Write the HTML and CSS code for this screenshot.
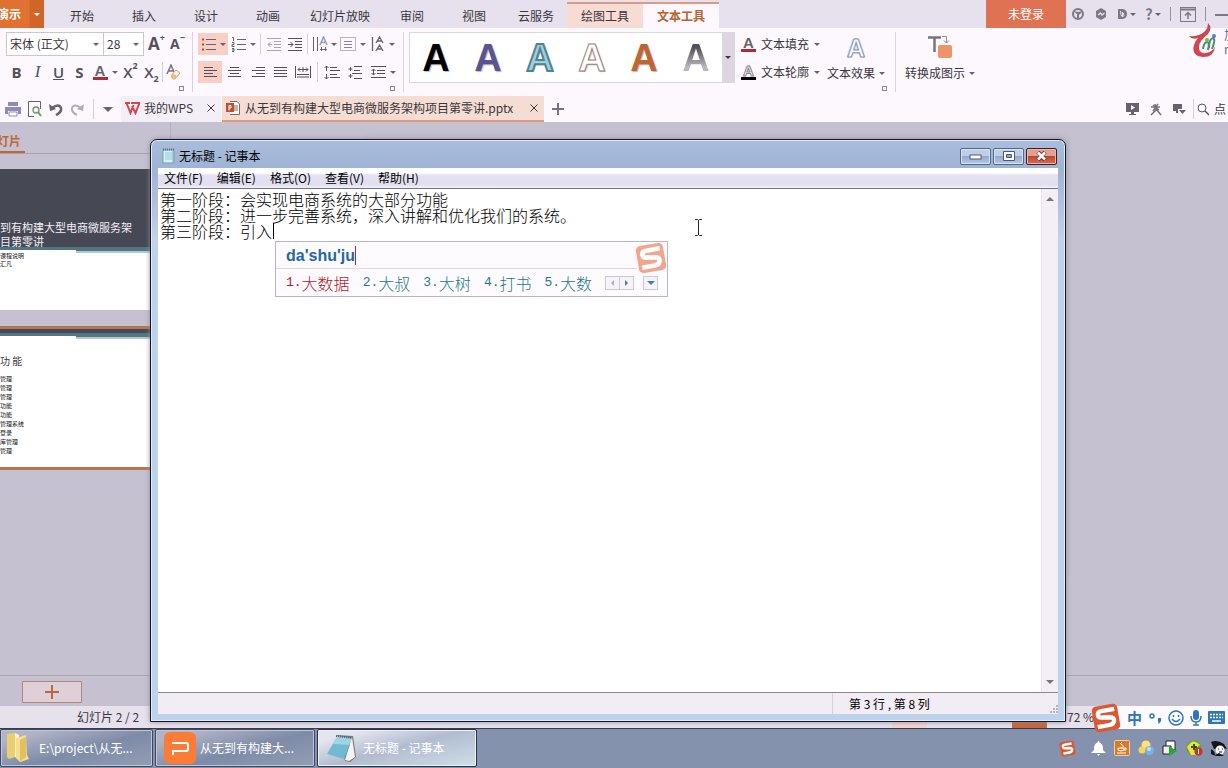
FILE: index.html
```html
<!DOCTYPE html>
<html lang="zh-CN">
<head>
<meta charset="utf-8">
<title>无标题 - 记事本</title>
<link rel="stylesheet" href="styles.css">
</head>
<body>
<div class="desktop">
<main class="app">
  <header class="tabs">
    <button class="brand"><span>演示</span><i class="caret light"></i></button>
    <nav class="tab-list">
      <button class="tab">开始</button>
      <button class="tab">插入</button>
      <button class="tab">设计</button>
      <button class="tab">动画</button>
      <button class="tab wide">幻灯片放映</button>
      <button class="tab">审阅</button>
      <button class="tab">视图</button>
      <button class="tab">云服务</button>
      <button class="tab context">绘图工具</button>
      <button class="tab context active">文本工具</button>
    </nav>
    <button class="login">未登录</button>
    <div class="sys">
      <button aria-label="皮肤"><svg width="14" height="14" viewBox="0 0 14 14"><circle cx="7" cy="7" r="5" fill="none" stroke="#7c7884" stroke-width="2"/><path d="M2 4l4 3v5h2V8l4-4-5 1z" fill="#7c7884"/></svg></button>
      <button aria-label="消息"><svg width="14" height="14" viewBox="0 0 14 14"><path d="M7 1l5 3v6l-5 3-5-3V4z" fill="#7c7884"/><path d="M4 8l2.500-2 1.500 2 2.500-2" fill="none" stroke="#e6e1ec" stroke-width="1.300"/></svg></button>
      <button aria-label="云文档"><svg width="11" height="14" viewBox="0 0 11 14"><path d="M1 2h5q4 1 4 5t-4 5H1z" fill="#7c7884"/><path d="M3.500 4q0 5 2 6 2-1 1-4M5.500 10V5" fill="none" stroke="#e6e1ec"/></svg><i class="caret"></i></button>
      <button aria-label="帮助"><b>?</b><i class="caret"></i></button>
      <i class="sep"></i>
      <button class="up" aria-label="折叠功能区"><svg width="16" height="15" viewBox="0 0 16 15"><rect x=".5" y=".5" width="15" height="14" fill="none" stroke="#7c7884"/><path d="M1 2.500h14" stroke="#7c7884" stroke-width="2"/><path d="M8 12V6M5 8.500l3-3 3 3" fill="none" stroke="#7c7884" stroke-width="1.500"/></svg></button>
      <i class="sep"></i>
      <button class="min" aria-label="最小化"></button>
    </div>
  </header>

  <section class="ribbon">
    <div class="group font-group">
      <div class="row">
        <div class="combo"><input class="font-name" aria-label="字体" value="宋体 (正文)"><i class="caret"></i></div>
        <div class="combo size"><input class="font-size" aria-label="字号" value="28"><i class="caret"></i></div>
        <button class="tool grow" aria-label="增大字号">A<sup>+</sup></button>
        <button class="tool shrink" aria-label="减小字号">A<sup>−</sup></button>
      </div>
      <div class="row">
        <button class="tool"><b>B</b></button>
        <button class="tool serif"><i>I</i></button>
        <button class="tool strong"><u>U</u></button>
        <button class="tool"><b>S</b></button>
        <button class="tool drop" aria-label="字体颜色"><span class="bar-a red">A</span><i class="caret"></i></button>
        <button class="tool x">X<sup>2</sup></button>
        <button class="tool x">X<sub>2</sub></button>
        <i class="sep"></i>
        <button class="tool" aria-label="清除格式"><svg width="16" height="16" viewBox="0 0 16 16"><path d="M1 10L5 1l3 7M2.500 7H7" fill="none" stroke="#77737e" stroke-width="1.500"/><path d="M5 12l5-6 4 3-5 6H7z" fill="#fff8ef" stroke="#d8a468"/><path d="M5 12l2-3 4 3-2 3H7z" fill="#eebb80"/></svg></button>
      </div>
      <i class="launcher"></i>
    </div>

    <div class="group para-group">
      <div class="row">
        <button class="tool drop on" aria-label="项目符号"><svg width="15" height="15" viewBox="0 0 15 15"><path d="M5 2.500h10M5 7.500h10M5 12.500h10" stroke="#67636e"/><path d="M1 2.500h2M1 7.500h2M1 12.500h2" stroke="#a0524a" stroke-width="2"/></svg><i class="caret"></i></button>
        <button class="tool drop" aria-label="编号"><svg width="15" height="17" viewBox="0 0 15 17"><path d="M6 3.500h9M6 8.500h9M6 13.500h9" stroke="#67636e"/><path d="M1 1.500h1.500V5M1 6.500h2v2H1v2h2.500M1 12.500h2v3H1M1 14h2" fill="none" stroke="#67636e"/></svg><i class="caret"></i></button>
        <i class="sep"></i>
        <button class="tool faint" aria-label="减少缩进"><svg width="14" height="14" viewBox="0 0 14 14"><path d="M0 1.500h14M7 4.500h7M7 7.500h7M7 10.500h7M0 13.500h14M5 7.500H1M3.500 5L1 7.500 3.500 10" fill="none" stroke="#55515c"/></svg></button>
        <button class="tool" aria-label="增加缩进"><svg width="14" height="14" viewBox="0 0 14 14"><path d="M0 1.500h14M7 4.500h7M7 7.500h7M7 10.500h7M0 13.500h14M0 7.500h5M2.500 5L5 7.500 2.500 10" fill="none" stroke="#55515c"/></svg></button>
        <i class="sep"></i>
        <button class="tool dir" aria-label="文字方向"><svg width="16" height="16" viewBox="0 0 16 16"><path d="M1.500 1v14M5.500 1v14M9.500 11v4M13.500 11v4M8 13.500h7" stroke="#67636e"/><path d="M8 9l3.500-8L15 9M9 6.500h5" fill="none" stroke="#9a9bb8" stroke-width="1.500"/></svg><i class="caret"></i></button>
        <button class="tool drop" aria-label="对齐文本"><svg width="16" height="14" viewBox="0 0 16 14"><rect x=".5" y=".5" width="15" height="13" fill="none" stroke="#77737e" stroke-dasharray="1 1"/><path d="M4 4.500h8M4 7.500h8M4 10.500h8" stroke="#8482a0"/></svg><i class="caret"></i></button>
        <button class="tool drop" aria-label="文字排列"><svg width="14" height="16" viewBox="0 0 14 16"><path d="M1.500 1v14M5 7l3.500-6L12 7M6.500 5h4M5 15l3.500-6 3.500 6M6.500 13h4" fill="none" stroke="#67636e" stroke-width="1.300"/></svg><i class="caret"></i></button>
      </div>
      <div class="row">
        <button class="tool on left" aria-label="左对齐"><svg width="13" height="11" viewBox="0 0 13 11"><path d="M0 .5h9M0 3.500h13M0 6.500h9M0 9.500h13" stroke="#55515c"/></svg></button>
        <button class="tool w24" aria-label="居中"><svg width="13" height="11" viewBox="0 0 13 11"><path d="M2 .5h9M0 3.500h13M2 6.500h9M0 9.500h13" stroke="#55515c"/></svg></button>
        <button class="tool w24" aria-label="右对齐"><svg width="13" height="11" viewBox="0 0 13 11"><path d="M4 .5h9M0 3.500h13M4 6.500h9M0 9.500h13" stroke="#55515c"/></svg></button>
        <button class="tool" aria-label="两端对齐"><svg width="13" height="11" viewBox="0 0 13 11"><path d="M0 .5h13M0 3.500h13M0 6.500h13M0 9.500h13" stroke="#55515c"/></svg></button>
        <button class="tool w24" aria-label="分散对齐"><svg width="16" height="12" viewBox="0 0 16 12"><path d="M.5 0v12M15.500 0v12M3 3.500h10M5 1.500l-2 2 2 2M11 1.500l2 2-2 2M8 1v5M2 8.500h12M2 11h12" fill="none" stroke="#55515c"/></svg></button>
        <i class="sep"></i>
        <button class="tool w24" aria-label="行距"><svg width="16" height="15" viewBox="0 0 16 15"><path d="M6 2.500h7M6 5.500h10M6 9.500h7M6 12.500h10M2.500 1v5M.5 3l2-2 2 2M2.500 9v5M.5 12l2 2 2-2" fill="none" stroke="#55515c"/></svg></button>
        <button class="tool w24" aria-label="段落间距"><svg width="16" height="15" viewBox="0 0 16 15"><path d="M6 1.500h8M6 5.500h6M4 8.500h10M6 13.500h8M2.500 2v4M.5 4h4M2.500 9v4M.5 11h4" fill="none" stroke="#55515c"/></svg></button>
        <button class="tool drop" aria-label="行间距"><svg width="15" height="14" viewBox="0 0 15 14"><path d="M0 1.500h15M6 5.500h8M6 8.500h8M0 12.500h15M2.500 4v6M.5 6l2-2 2 2M.5 8l2 2 2-2" fill="none" stroke="#55515c"/></svg><i class="caret"></i></button>
      </div>
      <i class="launcher"></i>
    </div>

    <div class="group art-group">
      <div class="gallery">
        <button class="art black">A</button>
        <button class="art violet">A</button>
        <button class="art aqua">A</button>
        <button class="art hollow">A</button>
        <button class="art rust">A</button>
        <button class="art fade">A</button>
        <button class="more" aria-label="更多样式"><i class="caret"></i></button>
      </div>
      <div class="stack">
        <button class="cmd"><span class="bar-a red">A</span>文本填充<i class="caret"></i></button>
        <button class="cmd"><span class="bar-a ink">A</span>文本轮廓<i class="caret"></i></button>
      </div>
      <button class="big"><span class="effect">A</span><span class="cap">文本效果<i class="caret"></i></span></button>
      <i class="launcher"></i>
    </div>

    <div class="group last">
      <button class="big"><svg width="26" height="24" viewBox="0 0 26 24"><path d="M1 2.500h13M7.500 3v14" stroke="#77737e" stroke-width="2.500"/><path d="M15 1.500h4.500V8M17 5.500l2.500 2.500L22 5.500" fill="none" stroke="#8d8a9c"/><rect x="11" y="10" width="14" height="13" rx="2" fill="#ee9468"/></svg><span class="cap">转换成图示<i class="caret"></i></span></button>
    </div>
  </section>

  <section class="docbar">
    <div class="quick">
      <button aria-label="打印"><svg width="16" height="15" viewBox="0 0 16 15"><path d="M3 0h10v4H3zM0 5h16v7h-3V9H3v3H0z" fill="#8d8bb8"/><path d="M4 10h8v4H4z" fill="#fff" stroke="#8d8bb8"/></svg></button>
      <button aria-label="打印预览"><svg width="14" height="16" viewBox="0 0 14 16"><path d="M12.500 8V.5H.5v15H6" fill="none" stroke="#67636e"/><circle cx="8" cy="9" r="3" fill="#eef5ea" stroke="#6b9a68" stroke-width="1.300"/><path d="M10 11l3 4" stroke="#6b9a68" stroke-width="2"/></svg></button>
      <button aria-label="撤销"><svg width="14" height="13" viewBox="0 0 14 13"><path d="M3 5q7-5 9 0 1 4-5 7" fill="none" stroke="#67636e" stroke-width="2.500"/><path d="M0 1l1 7 6-2z" fill="#67636e"/></svg></button>
      <button class="faint" aria-label="恢复"><svg width="14" height="13" viewBox="0 0 14 13"><path d="M11 5Q4 0 2 5q-1 4 5 7" fill="none" stroke="#67636e" stroke-width="2"/><path d="M14 1l-1 7-6-2z" fill="#67636e"/></svg></button>
      <i class="sep"></i>
      <button aria-label="自定义"><i class="caret big-caret"></i></button>
    </div>
    <div class="doc home"><svg width="16" height="13" viewBox="0 0 16 13"><path d="M0 1h5M1.500 1l4 10 3-8M6 1h9M7 4l3.500 7 4-10" fill="none" stroke="#d14750" stroke-width="2"/></svg><span>我的WPS</span><button aria-label="关闭我的WPS"><svg width="8" height="8" viewBox="0 0 8 8"><path d="M.5.500l7 7M7.500.500l-7 7" stroke="#3a3640"/></svg></button></div>
    <div class="doc current"><svg width="14" height="14" viewBox="0 0 14 14"><path d="M4 .5h7l2.500 2.500v10.500H4" fill="#fff" stroke="#8d6758"/><path d="M8 5h4M8 7h4M8 9h4" stroke="#8d6758"/><rect y="2" width="8" height="9" fill="#b95233"/><path d="M3 9.500V4.500h2v2.500H3" fill="none" stroke="#fff"/></svg><span>从无到有构建大型电商微服务架构项目第零讲.pptx</span><button aria-label="关闭文档"><svg width="8" height="8" viewBox="0 0 8 8"><path d="M.5.500l7 7M7.500.500l-7 7" stroke="#3a3640"/></svg></button></div>
    <button class="plus" aria-label="新建"><svg width="12" height="12" viewBox="0 0 12 12"><path d="M6 0v12M0 6h12" stroke="#77737e" stroke-width="2"/></svg></button>
    <div class="find">
      <button aria-label="放映"><svg width="13" height="12" viewBox="0 0 13 12"><path d="M0 0h13v9H8v2h2v1H3v-1h2V9H0z" fill="#67636e"/><path d="M5 2l4 2.500L5 7z" fill="#fff"/></svg></button>
      <button aria-label="特色功能"><svg width="12" height="13" viewBox="0 0 12 13"><path d="M1 4h9M5 1l1 6-5 5M3 2l6 5M8 1L3 8M6 6l5 6" fill="none" stroke="#77737e" stroke-width="1.500"/></svg></button>
      <button aria-label="选择"><svg width="13" height="11" viewBox="0 0 13 11"><path d="M0 0h9v5H5v4H3V7H0zM6 6h7l-3.500 4z" fill="#67636e"/></svg></button>
      <i class="sep"></i>
      <button aria-label="搜索"><svg width="12" height="13" viewBox="0 0 12 13"><circle cx="5" cy="5" r="4" fill="none" stroke="#55515c"/><path d="M8 8l4 4" stroke="#55515c" stroke-width="1.500"/></svg></button>
      <span>点</span>
    </div>
  </section>

  <section class="work">
    <aside class="panel">
      <div class="panel-head"><b>灯片</b></div>
      <div class="slides">
        <div class="slide cover">
          <div class="cover-title">到有构建大型电商微服务架<br>目第零讲</div>
          <div class="accent"></div>
          <div class="cover-sub">课程说明<br>汇凡</div>
        </div>
        <div class="slide picked">
          <div class="band"></div><div class="accent"></div>
          <h3>功 能</h3>
          <ul><li>管理</li><li>管理</li><li>管理</li><li>功能</li><li>功能</li><li>管理系统</li><li>登录</li><li>库管理</li><li>管理</li></ul>
        </div>
      </div>
      <div class="panel-foot"><button aria-label="新建幻灯片"><svg width="14" height="14" viewBox="0 0 14 14"><path d="M7 0v14M0 7h14" stroke="#b9683f" stroke-width="2"/></svg></button></div>
    </aside>
    <div class="canvas"><div class="page"></div><div class="notes"></div></div>
  </section>

  <footer class="status">
    <span class="count">幻灯片 2 / 2</span>
    <span class="views"><i class="view soft"></i><i class="view hot"></i></span>
    <span class="zoom">72 %</span>
  </footer>
</main>

<div class="watermark">
  <svg width="32" height="36" viewBox="0 0 32 36"><path d="M20 0q5 5 0 11-9 7-9 13 0 7 7 6 6-1 9-6-1 10-12 10Q3 33 6 22q1-4 4-7Q4 17 1 13q11 1 16-5 3-3 3-8z" fill="#cf4550"/><path d="M15 26q1-7 4-7t1 8M21 25q0-9 4-10 3 1-1 11" fill="none" stroke="#4b8f70" stroke-width="2"/><circle cx="19" cy="17" r="2" fill="#93ac45"/><circle cx="26" cy="13" r="2" fill="#4b83c2"/></svg>
  <div><span>加</span><span>ro</span></div>
</div>

<footer class="taskbar">
  <button class="task"><svg width="28" height="32" viewBox="0 0 28 32"><path d="M3 2l8-1v24l-6 2-2-2z" fill="#e9cf72"/><path d="M11 1l4 2v25l-4-3z" fill="#fff3c0"/><path d="M12 6l10-3 1 20 2 4-9 3-4-4z" fill="#f3dd8f"/><path d="M16 8l6-3v20l-6 4z" fill="#e2c060"/></svg><span>E:\project\从无...</span></button>
  <button class="task"><svg width="32" height="32" viewBox="0 0 32 32"><rect width="32" height="32" rx="6" fill="#fb7c37"/><path d="M8 11h14q2 0 2 2v4q0 2-2 2H9v4" fill="none" stroke="#fff" stroke-width="2"/></svg><span>从无到有构建大...</span></button>
  <button class="task current"><svg width="32" height="30" viewBox="0 0 32 30"><path d="M11 2l16 1 3 21-6 5-5-1z" fill="#77777c"/><path d="M26 4l3 20-6 4-4-1z" fill="#f4f4f0"/><path d="M11 3l15 2-8 21L1 21z" fill="#9fd3e6"/><path d="M7 11l17 1-6 14L1 21z" fill="#55a9c4" opacity=".6"/><path d="M10 3l16 2" stroke="#5b6068" stroke-width="2" stroke-dasharray="1 1"/></svg><span>无标题 - 记事本</span></button>
  <div class="tray">
    <svg width="17" height="17" viewBox="0 0 28 28"><g transform="rotate(-10 14 14)"><rect x="2" y="2" width="24" height="24" rx="4" fill="#dd5732"/><path d="M22 7H11q-4 0-4 3t4 3l7 1q4 1 3 4t-5 3H6" fill="none" stroke="#fff" stroke-width="4"/></g></svg>
    <svg class="bell" width="15" height="15" viewBox="0 0 15 15"><path d="M7.500 0q1 0 1 1.500Q12 3 12 7v2l3 3H0l3-3V7q0-4 3.500-5.500Q6.500 0 7.500 0zM6 13h3l-1.500 2z" fill="#fff"/></svg>
    <svg width="16" height="16" viewBox="0 0 16 16"><rect x=".5" y=".5" width="15" height="15" rx="1" fill="#d87a2c" stroke="#f2cfa0"/><path d="M8 2q-3 2 0 3t-1 3M4 8h6v2q-3 2-6 0zM10 8h2v2h-2M3 13h9" fill="none" stroke="#fff"/></svg>
    <svg width="16" height="16" viewBox="0 0 16 16"><circle cx="8" cy="5" r="4.500" fill="#ffe27a"/><circle cx="4" cy="10" r="3.500" fill="#f8d457"/><circle cx="11.500" cy="10.500" r="4.500" fill="#78b3e8"/><circle cx="11" cy="9" r="2" fill="#c2e0fa"/></svg>
    <svg width="16" height="16" viewBox="0 0 16 16"><path d="M4 1h9v9H4z" fill="#fff" stroke="#222"/><path d="M1 6h8v8H1z" fill="#eee" stroke="#222"/><path d="M7 6l8 5-8 5z" fill="#26a637"/></svg>
    <svg width="17" height="16" viewBox="0 0 17 16"><circle cx="8" cy="8" r="7.500" fill="#5da832"/><path d="M1 7q6-10 13-2L8 9l3 6H5z" fill="#f3df3c"/><path d="M8 4v6M5 7h6" stroke="#265c20" stroke-width="2"/><circle cx="12.500" cy="11.500" r="4" fill="#c73427"/><path d="M12.500 9v5" stroke="#fff"/></svg>
    <svg width="16" height="16" viewBox="0 0 16 16"><path d="M0 2q6-3 13 2l3 5-6-1-7 1z" fill="#151515"/><circle cx="9" cy="10" r="4.500" fill="#f3f3f3"/><path d="M0 9q4 2 4 6l4-2 5 3q-8 1-13-2z" fill="#151515"/><path d="M7 9h1M11 9h1M8 12h3" stroke="#222"/></svg>
  </div>
</footer>

<section class="notepad">
  <div class="title">
    <svg width="13" height="16" viewBox="0 0 13 16"><path d="M1 2h11v13H1z" fill="#d8f0f5" stroke="#6ea3b5"/><path d="M1 1.500h11" stroke="#4c7383" stroke-width="2" stroke-dasharray="1 1"/><path d="M3 5h7M3 7h7M3 9h7M3 11h7" stroke="#94cbd8"/><path d="M11 3v12" stroke="#7fa9a9"/></svg>
    <span>无标题 - 记事本</span>
    <div class="controls">
      <button aria-label="最小化"><svg width="13" height="7" viewBox="0 0 13 7"><rect x="1" y="2" width="11" height="4" fill="#fff" stroke="#4c5876"/></svg></button>
      <button aria-label="最大化"><svg width="12" height="10" viewBox="0 0 12 10"><path d="M.5.500h11v9H.5z" fill="#fff" stroke="#4c5876"/><path d="M3.500 3.500h5v3h-5z" fill="#8fa6cc" stroke="#4c5876"/></svg></button>
      <button class="close" aria-label="关闭"><svg width="11" height="10" viewBox="0 0 11 10"><path d="M2 1l7 8M9 1L2 9" stroke="#5c3440" stroke-width="4"/><path d="M2 1.500l7 7M9 1.500l-7 7" stroke="#fff" stroke-width="2.500"/></svg></button>
    </div>
  </div>
  <div class="client">
    <nav class="menu"><button>文件(F)</button><button>编辑(E)</button><button>格式(O)</button><button>查看(V)</button><button>帮助(H)</button></nav>
    <div class="edit">
      <textarea aria-label="正文" spellcheck="false">第一阶段：会实现电商系统的大部分功能
第二阶段：进一步完善系统，深入讲解和优化我们的系统。
第三阶段：引入</textarea>
      <div class="scroll"><i class="arrow up"></i><i class="arrow down"></i></div>
      <i class="text-caret"></i>
    </div>
    <div class="note-status"><span>第 3 行 , 第 8 列</span><svg width="9" height="9" viewBox="0 0 9 9"><path d="M7 1h2M4 4h2M7 4h2M1 7h2M4 7h2M7 7h2" stroke="#b9b3c0" stroke-width="2"/></svg></div>
  </div>
</section>

<section class="ime">
  <div class="pinyin"><span>da'shu'ju</span></div>
  <div class="words">
    <button class="first"><span>1.</span>大数据</button><button><span>2.</span>大叔</button><button><span>3.</span>大树</button><button><span>4.</span>打书</button><button><span>5.</span>大数</button>
    <div class="pager"><button aria-label="上一页"><i class="prev"></i></button><button aria-label="下一页"><i class="next"></i></button></div>
    <button class="menu-btn" aria-label="菜单"><i class="caret blue"></i></button>
  </div>
  <svg class="ime-logo" width="32" height="32" viewBox="0 0 28 28"><g transform="rotate(-10 14 14)"><rect x="2" y="2" width="24" height="24" rx="4" fill="#f0a58d"/><path d="M23 7H11q-4 0-4 3t4 3l7 1q4 1 3 4t-5 3H5" fill="none" stroke="#fff" stroke-width="4"/></g></svg>
</section>

<svg class="pointer" width="9" height="17" viewBox="0 0 9 17"><path d="M1 .5h2.500l1 1 1-1H8M4.500 1v15M1 16.500h2.500l1-1 1 1H8" fill="none" stroke="#222"/></svg>

<section class="ime-bar">
  <svg width="30" height="30" viewBox="0 0 28 28"><g transform="rotate(-10 14 14)"><rect x="2" y="2" width="24" height="24" rx="4" fill="#dd5732"/><path d="M23 7H11q-4 0-4 3t4 3l7 1q4 1 3 4t-5 3H5" fill="none" stroke="#fff" stroke-width="4"/></g></svg>
  <button class="cn">中</button>
  <button aria-label="标点"><svg width="14" height="14" viewBox="0 0 14 14"><circle cx="4" cy="5" r="2" fill="none" stroke="#2e76b5" stroke-width="1.500"/><path d="M10 7h3q1 4-3 6 1-2 0-3z" fill="#2e76b5"/></svg></button>
  <button aria-label="表情"><svg width="16" height="16" viewBox="0 0 16 16"><circle cx="8" cy="8" r="7" fill="none" stroke="#2e76b5" stroke-width="1.500"/><path d="M5.500 5v2M10.500 5v2M4 9q4 5 8 0" fill="none" stroke="#2e76b5" stroke-width="1.500"/></svg></button>
  <button aria-label="语音"><svg width="12" height="16" viewBox="0 0 12 16"><rect x="3" width="6" height="10" rx="3" fill="#2e76b5"/><path d="M1 6q0 6 5 6t5-6M6 12v3M3 15h6" fill="none" stroke="#2e76b5" stroke-width="1.500"/></svg></button>
  <button aria-label="键盘"><svg width="17" height="13" viewBox="0 0 17 13"><rect width="17" height="13" rx="1" fill="#2e76b5"/><path d="M2 3.500h13M2 6.500h13" stroke="#fff" stroke-width="1.500" stroke-dasharray="2 1"/><path d="M4 10h9" stroke="#fff" stroke-width="1.500"/></svg></button>
</section>
</div>
</body>
</html>
```

FILE: styles.css
```css
* { box-sizing: border-box; }
body { margin: 0; }
button { border: 0; padding: 0; background: none; font: inherit; color: inherit; display: flex; align-items: center; justify-content: center; white-space: nowrap; }
svg { display: block; flex: none; }
i { flex: none; }

.desktop {
  position: relative; height: 100vh; min-height: 480px; overflow: hidden;
  display: flex; flex-direction: column;
  font: 12px/16px "Noto Sans CJK SC", sans-serif; color: #3a3640;
}
.app { flex: 1; min-height: 0; display: flex; flex-direction: column; background: #c6c1d0; }

.caret { border: 3px solid transparent; border-top-color: #67636e; border-bottom: 0; }
.caret.light { border-top-color: #fff; }
.caret.blue { border-width: 4px 4px 0; border-top-color: #3d82ad; }
.big-caret { border-width: 5px 5px 0; }
.sep { width: 1px; height: 20px; background: #d5cfdb; }
.faint { opacity: .5; }

/* Tab strip */
.tabs { display: flex; flex: none; height: 28px; background: #e6e1ec; }
.brand { width: 44px; background: linear-gradient(90deg, #e07131 29px, #cf6529 30px); color: #fff; font-weight: bold; justify-content: space-between; padding-right: 4px; overflow: hidden; }
.brand span { margin-left: -3px; }
.tab-list { display: flex; margin-left: 7px; }
.tab { width: 62px; padding-top: 4px; }
.tab.wide { width: 82px; }
.tab.context { width: 76px; background: #f8dbd3; border-top: 2px solid #dc9a86; padding-top: 0; margin-top: 2px; }
.tab.active { background: #fdf8fe; color: #b4642f; font-weight: bold; }
.login { width: 80px; margin-left: auto; background: #df7253; color: #fff; }
.sys { display: flex; align-items: center; gap: 9px; width: 162px; padding-left: 5px; overflow: hidden; }
.sys button { flex: none; gap: 2px; }
.sys b { font-size: 15px; color: #7c7884; }
.sys .sep { height: 14px; background: #97929f; }
.min { width: 20px; height: 2px; background: #7c7884; margin-top: 2px; }

/* Ribbon */
.ribbon { display: flex; flex: none; height: 68px; padding-top: 4px; background: #fdf8fe; overflow: hidden; }
.group { position: relative; height: 60px; border-right: 1px solid #d9d3df; }
.group.last { border: 0; padding-left: 2px; }
.row { display: flex; align-items: center; height: 24px; margin-bottom: 4px; }
.launcher { position: absolute; right: 8px; bottom: 1px; width: 5px; height: 5px; border: 1px solid #8a8691; }
.font-group { width: 193px; padding-left: 6px; }
.combo { display: flex; align-items: center; height: 24px; border: 1px solid #cbc5d2; padding-right: 4px; background: #fff; }
.combo.size { border-left: 0; margin-right: 2px; }
.combo input { border: 0; padding: 0 0 0 3px; font: inherit; color: inherit; background: none; min-width: 0; }
.font-name { width: 86px; }
.font-size { width: 29px; }
.tool { width: 21px; height: 22px; font-family: "Open Sans", sans-serif; font-size: 15px; color: #55515c; flex: none; }
.tool.strong { font-weight: 600; }
.tool.drop { width: 30px; gap: 4px; }
.tool.dir { width: 28px; gap: 3px; }
.tool.w24 { width: 24px; }
.tool.on { background: #f8cfc4; }
.tool.left { width: 24px; }
.tool.serif { font-family: "Liberation Serif", serif; font-size: 17px; }
.tool.grow { font-weight: bold; font-size: 17px; }
.tool.shrink { font-weight: bold; font-size: 14px; }
.tool sup, .tool sub { font-size: 9px; line-height: 9px; font-weight: bold; }
.tool sup { align-self: flex-start; }
.tool sub { align-self: flex-end; }
.tool.x { font-weight: 600; }
.bar-a { width: 15px; height: 16px; font: bold 15px/13px "Liberation Sans", sans-serif; text-align: center; color: #67636e; border-bottom: 3px solid #b52733; }
.bar-a.ink { border-color: #000; color: #fff; -webkit-text-stroke: 1px #8a8691; }
.para-group { width: 211px; padding-left: 5px; }
.para-group .sep { margin: 0 2px; }
.art-group { display: flex; width: 492px; padding-left: 5px; }
.gallery { display: flex; height: 51px; border: 1px solid #dcd6e2; background: #fff; }
.art { width: 52px; font: bold 38px/48px "Liberation Sans", sans-serif; text-shadow: 1px 1px 1px #bbb6c4; }
.black { color: #000; }
.violet { color: #5c5490; }
.aqua { color: #9fd0de; -webkit-text-stroke: 2px #4f8390; }
.hollow { color: #fff; -webkit-text-stroke: 1px #a07e76; }
.rust { color: #bd6733; }
.fade { color: transparent; text-shadow: none; background: linear-gradient(#55515c 30%, #bbb7c0 70%); -webkit-background-clip: text; background-clip: text; }
.more { width: 12px; background: #ddd6e0; }
.more .caret { border-top-color: #3a3640; }
.stack { padding-left: 6px; }
.cmd { height: 24px; gap: 5px; margin-bottom: 4px; }
.big { flex-direction: column; justify-content: space-between; height: 50px; padding: 3px 0 1px 7px; }
.big .cap { display: flex; align-items: center; gap: 4px; }
.effect { font: bold 25px/26px "Liberation Sans", sans-serif; color: #fff; -webkit-text-stroke: 1px #8792b5; text-shadow: 0 0 2px #7a9bd0; }
.watermark { position: absolute; right: 0; top: 23px; display: flex; width: 40px; overflow: hidden; color: #4b77a0; gap: 4px; }
.watermark div { padding-top: 5px; display: flex; flex-direction: column; line-height: 14px; }

/* Document tabs */
.docbar { display: flex; flex: none; align-items: stretch; height: 26px; background: #fdf8fe; overflow: hidden; }
.quick { display: flex; align-items: center; gap: 7px; width: 121px; padding-left: 5px; }
.quick .sep { margin-left: 2px; }
.quick .big-caret { margin-left: 2px; }
.doc { display: flex; align-items: center; gap: 3px; padding: 0 6px 0 4px; margin-right: 1px; background: #f4eef7; border-bottom: 2px solid #f4eef7; }
.doc.home { width: 100px; }
.doc.current { width: 322px; background: #f6ddd3; border-color: #dc9a80; gap: 5px; }
.doc button { margin-left: auto; }
.plus { width: 26px; }
.find { display: flex; align-items: center; gap: 11px; margin-left: auto; width: 102px; white-space: nowrap; overflow: hidden; }
.find .sep { margin: 0 -8px 0 -4px; }
.find span { margin-left: -6px; }

/* Work area */
.work { flex: 1; min-height: 0; display: flex; }
.panel { width: 171px; display: flex; flex-direction: column; border-right: 1px solid #b5afbe; overflow: hidden; }
.panel-head { height: 32px; padding-top: 11px; border-bottom: 1px solid #a9a3b1; color: #bd6936; }
.panel-head b { display: inline-block; height: 20px; width: 25px; border-bottom: 2px solid #bd6936; text-indent: -3px; }
.slides { flex: 1; min-height: 0; padding-top: 15px; overflow: hidden; }
.slide { height: 141px; background: #fff; overflow: hidden; }
.cover-title { height: 78px; padding-top: 51px; background: #464853; color: #f2f0f5; font-size: 11px; line-height: 14px; white-space: nowrap; }
.accent { height: 5px; background: linear-gradient(#527681 3px, transparent 3px); position: relative; }
.accent::after { content: ""; position: absolute; left: 76px; right: 0; top: 1px; height: 5px; background: linear-gradient(#527681 3px, #b3c9cd 3px); }
.cover-sub { font-size: 6px; line-height: 8px; color: #222; }
.picked { height: 144px; margin-top: 16px; border: solid #b87451; border-width: 3px 0; }
.band { height: 4px; background: #464853; }
.picked h3 { margin: 15px 0 5px; font: 10px/16px "Noto Sans CJK SC", sans-serif; }
.picked ul { list-style: none; margin: 0; padding: 0; font-size: 6px; line-height: 9px; color: #111; }
.panel-foot { height: 31px; padding: 5px 22px; border-top: 1px solid #aaa4b1; }
.panel-foot button { width: 60px; height: 22px; border: 1px solid #b08579; background: #dfd0d8; border-radius: 1px; }
.canvas { flex: 1; display: flex; flex-direction: column; padding-top: 13px; }
.page { flex: 1; margin: 0 160px 100px 196px; background: #c3bdcc; box-shadow: 0 0 4px #b9b3c2; }
.notes { height: 31px; border-top: 1px solid #aaa4b1; }
.status { display: flex; flex: none; align-items: center; height: 22px; background: #e7e1eb; padding-left: 77px; }
.views { display: flex; gap: 85px; margin-left: auto; align-self: stretch; }
.view { width: 35px; background: #f5d3cd; }
.view.hot { background: #c76535; }
.zoom { width: 161px; margin-left: 20px; }

/* Taskbar */
.taskbar { display: flex; flex: none; height: 40px; gap: 2px; background: #8592ae; border-top: 1px solid #333c50; padding-bottom: 1px; }
.task { width: 160px; justify-content: flex-start; gap: 4px; padding: 0 8px; color: #fff; border: 1px solid #40495f; box-shadow: inset 0 0 0 1px #c0c6d5; border-radius: 2px; background: linear-gradient(165deg, #b1b4c6 15%, #7e8ba7 55%, #939eb5); }
.task:first-child { width: 153px; padding-left: 3px; gap: 7px; }
.task.current { background: linear-gradient(165deg, #e5e5ef 15%, #b2bccf 50%, #cfdfea); gap: 5px; box-shadow: inset 0 0 0 1px #eef2f8; border-color: #29334a; }
.tray { display: flex; align-items: center; gap: 8px; margin-left: auto; width: 169px; overflow: hidden; }
.tray .bell { margin-left: 7px; }

/* Notepad window */
.notepad { position: absolute; left: 150px; top: 139px; right: 162px; bottom: 46px; display: flex; flex-direction: column; padding: 0 7px 7px; border: 1px solid #10182a; border-radius: 7px 7px 0 0; background: linear-gradient(#a9bddb, #9fb3d5 28px, #c3d1ea 100px, #bdd3ec 112px); box-shadow: inset 0 0 0 1px #e2ecf8, 0 0 5px #8f8b9c; color: #000; }
.title { display: flex; align-items: center; gap: 4px; height: 28px; flex: none; padding: 4px 1px 0 4px; }
.controls { display: flex; gap: 2px; margin-left: auto; }
.controls button { width: 31px; height: 17px; border: 1px solid #53668c; border-radius: 2px; background: linear-gradient(#c0cee6 45%, #92a9ce 50%, #b6c9e6); box-shadow: inset 0 0 0 1px #d7e2f2; }
.controls .close { border-color: #4a1c22; background: linear-gradient(#e2a090 45%, #bd4630 50%, #d5704f); box-shadow: inset 0 0 0 1px #e9b5a7; }
.client { flex: 1; min-height: 0; display: flex; flex-direction: column; background: #fff; }
.menu { display: flex; gap: 14px; height: 21px; flex: none; padding-left: 6px; background: linear-gradient(#fff 25%, #e4e2f1 35%, #e2dff0 85%, #f6f3fa); border-bottom: 1px solid #6e7388; }
.edit { position: relative; flex: 1; min-height: 0; display: flex; }
.edit textarea { flex: 1; border: 0; outline: 0; resize: none; padding: 2px; font: 16px/16px "Noto Sans CJK SC", sans-serif; color: #000; font-weight: 300; overflow: hidden; }
.text-caret { position: absolute; left: 115px; top: 34px; width: 1px; height: 16px; background: #000; }
.scroll { width: 17px; background: #f4eff7; border-left: 1px solid #e9e3ee; display: flex; flex-direction: column; justify-content: space-between; align-items: center; padding: 8px 0; }
.arrow { border: 4px solid transparent; }
.arrow.up { border-top: 0; border-bottom-color: #77737e; }
.arrow.down { border-bottom: 0; border-top-color: #77737e; }
.note-status { display: flex; height: 22px; flex: none; justify-content: flex-end; background: #f2ecf5; border-top: 1px solid #8d8994; }
.note-status span { width: 217px; padding: 3px 0 0 16px; border-left: 1px solid #d8d1dd; }
.note-status svg { align-self: flex-end; }

/* Input method */
.ime { position: absolute; left: 275px; top: 241px; width: 393px; height: 56px; background: #fefbff; border: 1px solid #b9b4c4; }
.pinyin { height: 27px; margin-right: 30px; padding: 4px 0 0 10px; border-bottom: 1px solid #dcd6e0; font: bold 16px/19px "Liberation Sans", sans-serif; color: #2268a5; }
.pinyin span { display: inline-block; border-right: 1px solid #a72b3c; }
.words { display: flex; align-items: center; gap: 13px; height: 28px; padding-left: 10px; font-size: 16px; color: #23788d; font-weight: 300; }
.words span { font: 13px/16px "Liberation Mono", monospace; }
.words .first { color: #b0182c; }
.pager { display: flex; }
.pager button, .menu-btn { width: 15px; height: 14px; border: 1px solid #ccc8da; background: #f6f3fa; }
.pager button + button { margin-left: -1px; }
.menu-btn { margin-left: -4px; }
.prev, .next { border: 3px solid transparent; }
.prev { border-left: 0; border-right-color: #b5b1bf; }
.next { border-right: 0; border-left-color: #3d82ad; }
.ime-logo { position: absolute; right: 0; top: 0; }
.pointer { position: absolute; left: 694px; top: 219px; }
.ime-bar { position: absolute; right: 0; bottom: 39px; width: 137px; height: 23px; display: flex; align-items: center; gap: 6px; background: linear-gradient(90deg, transparent 15px, #fdfbff 15px); color: #2e76b5; }
.ime-bar .cn { font-size: 15px; font-weight: bold; }
```
